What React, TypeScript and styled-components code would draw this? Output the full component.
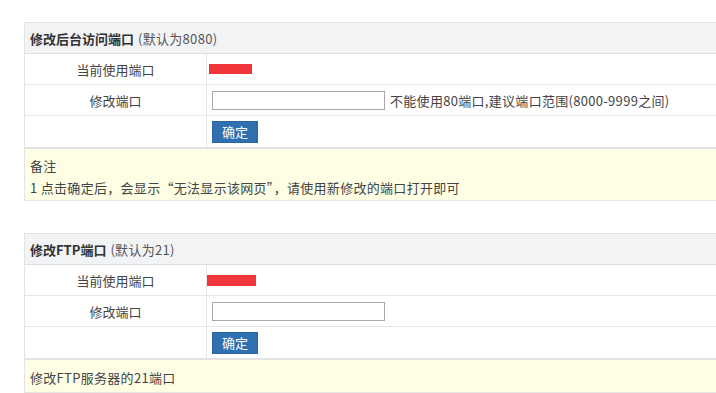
import React from "react";
import styled, { createGlobalStyle } from "styled-components";

const Global = createGlobalStyle`
  html, body { margin: 0; padding: 0; background: #fff; overflow: hidden; }
  body { font-family: "Microsoft YaHei", "Noto Sans CJK SC", "Noto Sans", sans-serif; font-size: 13px; color: #333; }
`;

const Page = styled.div`
  padding: 22px 0 0 24px;
  width: 720px;
  display: flex;
  flex-direction: column;
  gap: 32px;
`;

const Section = styled.section`
  border-left: 1px solid #e3e3e3;
  display: flex;
  flex-direction: column;
`;

const Header = styled.div`
  height: 30px;
  background: #f2f3f5;
  border-top: 1px solid #e3e4e6;
  border-bottom: 1px solid #dddee0;
  display: flex;
  align-items: center;
  padding-left: 5px;
`;

const Title = styled.b`
  font-weight: bold;
  color: #333;
`;

const Default = styled.span`
  color: #555;
  margin-left: 4px;
  letter-spacing: 0.3px;
`;

const Row = styled.div<{ $last?: boolean }>`
  display: grid;
  grid-template-columns: 182px 1fr;
  height: ${(p) => (p.$last ? 31 : 30)}px;
  border-bottom: ${(p) => (p.$last ? "2px solid #e2e2e2" : "1px solid #e6e6e6")};
`;

const Label = styled.div`
  border-right: 1px solid #e6e6e6;
  display: flex;
  align-items: center;
  justify-content: center;
  color: #444;
`;

const Cell = styled.div<{ $pad?: number }>`
  display: flex;
  align-items: center;
  padding-left: ${(p) => p.$pad ?? 5}px;
  gap: 5px;
  color: #444;
  letter-spacing: 0.3px;
`;

const Masked = styled.span<{ $w: number; $h: number }>`
  display: block;
  width: ${(p) => p.$w}px;
  height: ${(p) => p.$h}px;
  background: #f0353b;
`;

const Input = styled.input`
  box-sizing: border-box;
  width: 173px;
  height: 19px;
  border: 1px solid #a9a9a9;
  padding: 0 3px;
  margin: 0;
  font-size: 12px;
`;

const Button = styled.button`
  box-sizing: border-box;
  width: 46px;
  height: 22px;
  background: #2e70b0;
  border: 1px solid #2a64a0;
  color: #fff;
  font-family: inherit;
  font-size: 13px;
  padding: 0;
  margin: 0;
`;

const Note = styled.div<{ $h: number }>`
  background: #fefee4;
  border-bottom: 1px solid #e6e6e0;
  min-height: ${(p) => p.$h}px;
  padding: 4px 5px 0;
  box-sizing: border-box;
  display: flex;
  flex-direction: column;
  justify-content: center;
  line-height: 22px;
  color: #444;
  letter-spacing: 0.3px;
`;

export default function App() {
  return (
    <>
      <Global />
      <Page>
        <Section>
          <Header>
            <Title>修改后台访问端口</Title>
            <Default>(默认为8080)</Default>
          </Header>
          <Row>
            <Label>当前使用端口</Label>
            <Cell $pad={2}>
              <Masked $w={43} $h={10} />
            </Cell>
          </Row>
          <Row>
            <Label>修改端口</Label>
            <Cell>
              <Input />
              不能使用80端口,建议端口范围(8000-9999之间)
            </Cell>
          </Row>
          <Row $last>
            <Label />
            <Cell>
              <Button>确定</Button>
            </Cell>
          </Row>
          <Note $h={52}>
            <div>备注</div>
            <div>1 点击确定后，会显示“无法显示该网页”，请使用新修改的端口打开即可</div>
          </Note>
        </Section>
        <Section>
          <Header>
            <Title>修改FTP端口</Title>
            <Default>(默认为21)</Default>
          </Header>
          <Row>
            <Label>当前使用端口</Label>
            <Cell $pad={0}>
              <Masked $w={49} $h={11} />
            </Cell>
          </Row>
          <Row>
            <Label>修改端口</Label>
            <Cell>
              <Input />
            </Cell>
          </Row>
          <Row $last>
            <Label />
            <Cell>
              <Button>确定</Button>
            </Cell>
          </Row>
          <Note $h={33}>
            <div>修改FTP服务器的21端口</div>
          </Note>
        </Section>
      </Page>
    </>
  );
}
